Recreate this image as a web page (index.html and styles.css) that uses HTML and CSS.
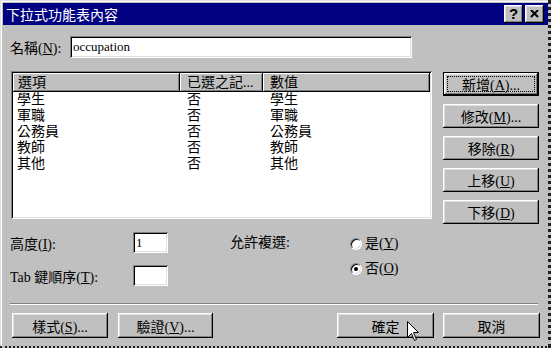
FILE: index.html
```html
<!DOCTYPE html>
<html lang="zh-Hant">

<head>
  <meta charset="UTF-8" />
  <meta name="viewport" content="width=device-width, initial-scale=1.0" />
  <title>下拉式功能表內容</title>
  <link rel="stylesheet" href="styles.css">
</head>

<body>
  <!-- 對話框主視窗 -->
  <div class="window">
    <!-- 標題列 -->
    <div class="titlebar">
      <span class="title">下拉式功能表內容</span>
      <div class="title-buttons">
        <span class="title-btn help">?</span>
        <span class="title-btn">
          <svg width="9" height="8" viewBox="0 0 9 8">
            <path d="M1 0 L8 7 M8 0 L1 7" stroke="#000" stroke-width="2" fill="none" />
          </svg>
        </span>
      </div>
    </div>

    <div class="content">
      <!-- 名稱 -->
      <div class="name-row">
        <label class="name-label">名稱(<u>N</u>):</label>
        <div class="field name-field">occupation</div>
      </div>

      <!-- 選項清單 + 右側按鈕 -->
      <div class="main">
        <div class="listbox">
          <div class="list-head">
            <span>選項</span>
            <span>已選之記...</span>
            <span>數值</span>
          </div>
          <div class="list-row"><span>學生</span><span>否</span><span>學生</span></div>
          <div class="list-row"><span>軍職</span><span>否</span><span>軍職</span></div>
          <div class="list-row"><span>公務員</span><span>否</span><span>公務員</span></div>
          <div class="list-row"><span>教師</span><span>否</span><span>教師</span></div>
          <div class="list-row"><span>其他</span><span>否</span><span>其他</span></div>
        </div>

        <div class="side-buttons">
          <button class="btn default">新增(<u>A</u>)...</button>
          <button class="btn">修改(<u>M</u>)...</button>
          <button class="btn">移除(<u>R</u>)</button>
          <button class="btn">上移(<u>U</u>)</button>
          <button class="btn">下移(<u>D</u>)</button>
        </div>
      </div>

      <!-- 高度 / Tab 順序 / 允許複選 -->
      <div class="options">
        <div class="option-fields">
          <label>高度(<u>I</u>):</label>
          <div class="field small-field">1</div>
          <label>Tab 鍵順序(<u>T</u>):</label>
          <div class="field small-field"></div>
        </div>
        <span class="multi-label">允許複選:</span>
        <div class="radios">
          <div class="radio-item"><span class="radio"></span><span>是(<u>Y</u>)</span></div>
          <div class="radio-item"><span class="radio checked"></span><span>否(<u>O</u>)</span></div>
        </div>
      </div>

      <div class="separator"></div>

      <!-- 底部按鈕 -->
      <div class="footer">
        <div class="footer-group">
          <button class="btn wide">樣式(<u>S</u>)...</button>
          <button class="btn wide narrow">驗證(<u>V</u>)...</button>
        </div>
        <div class="footer-group right">
          <button class="btn wider">確定</button>
          <button class="btn wider">取消</button>
        </div>
      </div>
    </div>

    <!-- 滑鼠游標 -->
    <svg class="cursor" width="13" height="20" viewBox="0 0 13 20">
      <path d="M0.5 0.5 L0.5 16.5 L4.5 12.5 L7.5 19.5 L9.5 18.5 L6.5 11.5 L11.5 11.5 Z" fill="#fff" stroke="#000" stroke-width="1" />
    </svg>
  </div>
</body>

</html>
```

FILE: styles.css
```css
* {
  box-sizing: border-box;
}

html,
body {
  margin: 0;
  background: #c0c0c0;
}

body {
  font-family: "Liberation Serif", "Noto Sans CJK TC", serif;
  font-size: 14px;
  color: #000;
}

u {
  text-decoration: underline;
  text-underline-offset: 1px;
}

/* 視窗外框 */
.window {
  position: relative;
  width: 551px;
  height: 348px;
  padding: 3px 0 0 3px;
  border-right: 3px dotted #202020;
  border-bottom: 2px dotted #202020;
  box-shadow: inset 1px 1px #dfdfdf, inset 2px 2px #fff;
}

/* 標題列 */
.titlebar {
  display: flex;
  align-items: center;
  height: 22px;
  padding: 0 4px 0 3px;
  background: #000080;
  color: #fff;
}

.title {
  flex: 1;
  font-family: "Noto Sans CJK TC", sans-serif;
  font-size: 14px;
  line-height: 22px;
}

.title-buttons {
  display: flex;
  gap: 2px;
}

.title-btn {
  display: flex;
  align-items: center;
  justify-content: center;
  width: 19px;
  height: 18px;
  background: #c0c0c0;
  box-shadow: inset -1px -1px #000, inset 1px 1px #fff, inset -2px -2px #808080, inset 2px 2px #dfdfdf;
}

.title-btn.help {
  font-family: "Liberation Sans", sans-serif;
  font-weight: bold;
  font-size: 15px;
  line-height: 18px;
  color: #000;
}

/* 內容區 */
.content {
  padding: 11px 8px 0 7px;
}

/* 凹陷的輸入框 */
.field {
  background: #fff;
  box-shadow: inset 1px 1px #808080, inset -1px -1px #fff, inset 2px 2px #000, inset -2px -2px #dfdfdf;
}

.name-row {
  display: flex;
  align-items: center;
  height: 22px;
}

.name-label {
  width: 60px;
}

.name-field {
  width: 342px;
  height: 22px;
  padding: 3px 3px;
  font-size: 13px;
  line-height: 16px;
}

/* 清單與右側按鈕 */
.main {
  display: flex;
  gap: 11px;
  margin-top: 13px;
  padding-left: 1px;
}

.listbox {
  width: 421px;
  height: 148px;
  padding: 2px;
  background: #fff;
  box-shadow: inset 1px 1px #808080, inset -1px -1px #fff, inset 2px 2px #000, inset -2px -2px #dfdfdf;
}

.list-head,
.list-row {
  display: grid;
  grid-template-columns: 167px 83px 1fr;
}

.list-head span {
  height: 19px;
  padding-left: 7px;
  line-height: 19px;
  background: #c0c0c0;
  box-shadow: inset -1px -1px #000, inset 1px 1px #fff, inset -2px -2px #808080;
}

.list-head span:first-child {
  padding-left: 5px;
}

.list-row span {
  height: 16px;
  padding-left: 7px;
  line-height: 16px;
}

.list-row span:first-child {
  padding-left: 4px;
}

.side-buttons {
  display: flex;
  flex-direction: column;
  gap: 8px;
  margin-top: 1px;
}

/* 立體按鈕 */
.btn {
  position: relative;
  width: 96px;
  height: 24px;
  padding: 0;
  border: none;
  background: #c0c0c0;
  font-family: "Liberation Serif", "Noto Sans CJK TC", serif;
  font-size: 14px;
  color: #000;
  box-shadow: inset -1px -1px #000, inset 1px 1px #fff, inset -2px -2px #808080, inset 2px 2px #dfdfdf;
}

/* 預設按鈕：外加黑框與焦點虛線 */
.btn.default {
  border: 1px solid #000;
}

.btn.default::after {
  content: "";
  position: absolute;
  inset: 3px;
  border: 1px dotted #000;
}

.btn.wide {
  width: 96px;
  height: 25px;
}

.btn.narrow {
  width: 95px;
}

.btn.wider {
  width: 97px;
  height: 25px;
}

/* 高度 / Tab 順序 / 允許複選 */
.options {
  display: flex;
  align-items: flex-start;
  margin-top: 8px;
}

.option-fields {
  display: grid;
  grid-template-columns: 123px 35px;
  align-items: center;
  row-gap: 12px;
}

.small-field {
  height: 21px;
  padding: 2px 3px;
  font-size: 13px;
  line-height: 17px;
}

.multi-label {
  width: 120px;
  margin-left: 62px;
  line-height: 21px;
}

.radios {
  display: flex;
  flex-direction: column;
  gap: 11px;
  margin-top: 5px;
}

.radio-item {
  display: flex;
  align-items: center;
  gap: 3px;
  height: 14px;
  line-height: 14px;
}

.radio {
  position: relative;
  width: 12px;
  height: 12px;
  border-radius: 50%;
  background: #fff;
  border: 1px solid;
  border-color: #808080 #fff #fff #808080;
  box-shadow: inset 1px 1px #000, inset -1px -1px #dfdfdf;
}

.radio.checked::after {
  content: "";
  position: absolute;
  left: 3px;
  top: 3px;
  width: 4px;
  height: 4px;
  border-radius: 50%;
  background: #000;
}

/* 分隔線 */
.separator {
  margin: 17px 2px 0 0;
  border-top: 1px solid #808080;
  border-bottom: 1px solid #fff;
}

/* 底部按鈕列 */
.footer {
  display: flex;
  justify-content: space-between;
  margin-top: 8px;
  padding-left: 2px;
}

.footer-group {
  display: flex;
  gap: 10px;
}

.footer-group.right {
  gap: 9px;
}

/* 游標（覆蓋在確定按鈕上） */
.cursor {
  position: absolute;
  left: 407px;
  top: 321px;
}
```
